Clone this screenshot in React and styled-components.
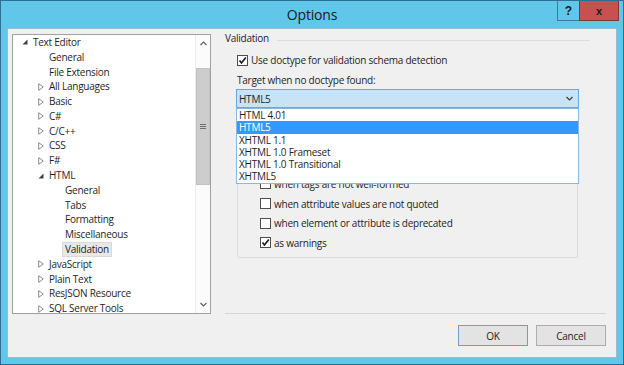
import React from 'react';
import styled, { createGlobalStyle } from 'styled-components';

const GlobalStyle = createGlobalStyle`
  html, body {
    margin: 0;
    padding: 0;
    background: #ffffff;
  }

  body {
    font-family: "Segoe UI", "Open Sans", "Noto Sans", sans-serif;
    font-size: 10px;
    color: #1e1e1e;
  }
`

const Frame = styled.div`
  width: 624px;
  height: 365px;
  box-sizing: border-box;
  border: 1px solid #2f6f8f;
  background: #60c6ea;
  display: flex;
  flex-direction: column;
`

const TitleBar = styled.div`
  height: 27px;
  flex-shrink: 0;
  display: grid;
  grid-template-columns: 1fr auto 1fr;
`

const Title = styled.div`
  grid-column: 2;
  align-self: center;
  font-size: 14px;
  color: #1a1a1a;
  letter-spacing: -0.2px;
`

const CaptionButtons = styled.div`
  grid-column: 3;
  justify-self: end;
  align-self: start;
  display: flex;
  margin-right: 4px;
`

const CaptionButton = styled.div`
  width: ${p => p.$w}px;
  height: 20px;
  box-sizing: border-box;
  border: 1px solid ${p => p.$close ? '#7a3a3a' : '#3d7d9c'};
  border-top: none;
  margin-left: -1px;
  background: ${p => p.$close ? '#c75050' : '#60c6ea'};
  display: flex;
  align-items: center;
  justify-content: center;
  font-family: "Liberation Sans", Arial, sans-serif;
  font-weight: bold;
  font-size: ${p => p.$close ? 11 : 12}px;
  color: #1b1b1b;
`

const Client = styled.div`
  flex: 1;
  margin: 0 6px 6px 6px;
  border: 1px solid #9cbccb;
  background: #f0f0f0;
  display: flex;
  flex-direction: column;
`

const Body = styled.div`
  display: flex;
  padding: 5px 10px 0 4px;
`

const Tree = styled.div`
  width: 199px;
  height: 280px;
  box-sizing: border-box;
  border: 1px solid #a0a0a0;
  background: #ffffff;
  display: flex;
  flex-shrink: 0;
`

const TreeList = styled.div`
  flex: 1;
  overflow: hidden;
`

const TreeRow = styled.div`
  height: 14.8px;
  display: flex;
  align-items: center;
  padding-left: ${p => 6 + p.$level * 16}px;
  white-space: nowrap;
`

const Expander = styled.span`
  width: 12px;
  height: 12px;
  display: flex;
  align-items: center;
  justify-content: center;
  flex-shrink: 0;
`

const TreeLabel = styled.span`
  margin-left: -1px;
  padding: 0 2px;
  line-height: 13px;
  border: 1px solid ${p => p.$selected ? '#d9d9d9' : 'transparent'};
  background: ${p => p.$selected ? '#e8e8e8' : 'transparent'};
  letter-spacing: -0.25px;
`

const ScrollBar = styled.div`
  width: 14px;
  border-left: 1px solid #ececec;
  display: flex;
  flex-direction: column;
  background: #fbfbfb;
`

const ScrollArrow = styled.div`
  height: 17px;
  display: flex;
  align-items: center;
  justify-content: center;
  flex-shrink: 0;
`

const ScrollTrack = styled.div`
  flex: 1;
  padding-top: 16px;
`

const Thumb = styled.div`
  height: 117px;
  box-sizing: border-box;
  background: #cdcdcd;
  border: 1px solid #c2c2c2;
  display: flex;
  align-items: center;
  justify-content: center;
`

const Pane = styled.div`
  flex: 1;
  margin-left: 14px;
  border-bottom: 1px solid #d5d5d5;
  display: flex;
  flex-direction: column;
`

const Heading = styled.div`
  display: flex;
  align-items: center;
  height: 12px;
  margin-top: -2px;
  letter-spacing: -0.25px;

  &::after {
    content: "";
    flex: 1;
    margin: 4px 16px 0 8px;
    border-top: 1px solid #d9dde0;
  }
`

const Section = styled.div`
  padding-left: 12px;
  display: flex;
  flex-direction: column;
`

const CheckRow = styled.div`
  height: ${p => p.$h || 14}px;
  margin-top: ${p => p.$mt || 0}px;
  padding-left: ${p => p.$indent || 0}px;
  display: flex;
  align-items: center;
  gap: 3px;
  white-space: nowrap;
  letter-spacing: -0.25px;
`

const Box = styled.span`
  width: 11px;
  height: 11px;
  box-sizing: border-box;
  border: 1px solid #4d4d4d;
  background: #ffffff;
  display: flex;
  align-items: center;
  justify-content: center;
  flex-shrink: 0;
`

const FieldLabel = styled.div`
  height: 14px;
  margin-top: 6px;
  display: flex;
  align-items: center;
  letter-spacing: -0.25px;
`

const ComboWrap = styled.div`
  position: relative;
  margin-top: 2px;
  margin-left: -1px;
  width: 343px;
`

const Combo = styled.div`
  height: 19px;
  box-sizing: border-box;
  border: 1px solid #6fa6d6;
  background: #c8e2f6;
  display: flex;
  align-items: center;
  justify-content: space-between;
  padding: 0 5px 0 2px;
  letter-spacing: -0.25px;
`

const DropList = styled.div`
  position: absolute;
  top: 100%;
  left: 0;
  width: 343px;
  box-sizing: border-box;
  border: 1px solid #8ab8d8;
  background: #ffffff;
  z-index: 2;
`

const DropItem = styled.div`
  height: 12.3px;
  line-height: 12.3px;
  padding-left: 2px;
  background: ${p => p.$active ? '#3399ff' : 'transparent'};
  color: ${p => p.$active ? '#ffffff' : '#1e1e1e'};
  letter-spacing: -0.25px;
`

const GroupBox = styled.div`
  margin-top: 4px;
  width: 341px;
  box-sizing: border-box;
  border: 1px solid #dcdcdc;
  border-radius: 2px;
  padding: 61px 0 4px 0;
`

const Footer = styled.div`
  display: flex;
  justify-content: flex-end;
  gap: 8px;
  padding: 11px 10px 11px 0;
`

const Button = styled.div`
  width: 70px;
  height: 21px;
  box-sizing: border-box;
  border: 1px solid ${p => p.$default ? '#6c9fcb' : '#acacac'};
  background: #e3e3e3;
  display: flex;
  align-items: center;
  justify-content: center;
  letter-spacing: -0.2px;
`

const Check = () => (
  <svg width="9" height="9" viewBox="0 0 9 9">
    <polyline points="1.5,4.5 3.5,7 7.8,1.5" fill="none" stroke="#1e1e1e" strokeWidth="1.7" />
  </svg>
)

const CheckBox = ({ checked, label, ...rest }) => (
  <CheckRow {...rest}>
    <Box>{ checked && <Check /> }</Box>
    <span>{ label }</span>
  </CheckRow>
)

const ExpandIcon = ({ state }) => {
  if (state === 'open') {
    return (
      <svg width="6" height="6" viewBox="0 0 6 6">
        <polygon points="5.5,0.5 5.5,5.5 0.5,5.5" fill="#404040" />
      </svg>
    )
  }
  if (state === 'closed') {
    return (
      <svg width="6" height="8" viewBox="0 0 6 8">
        <polygon points="0.7,0.7 5.3,4 0.7,7.3" fill="none" stroke="#8c8c8c" strokeWidth="1" />
      </svg>
    )
  }
  return null
}

const Chevron = ({ up, color = '#606060' }) => (
  <svg width="7" height="5" viewBox="0 0 7 5">
    <polyline points={ up ? '0.5,4 3.5,1 6.5,4' : '0.5,1 3.5,4 6.5,1' } fill="none" stroke={ color } strokeWidth="1.2" />
  </svg>
)

const treeItems = [
  { label: 'Text Editor', level: 0, state: 'open' },
  { label: 'General', level: 1 },
  { label: 'File Extension', level: 1 },
  { label: 'All Languages', level: 1, state: 'closed' },
  { label: 'Basic', level: 1, state: 'closed' },
  { label: 'C#', level: 1, state: 'closed' },
  { label: 'C/C++', level: 1, state: 'closed' },
  { label: 'CSS', level: 1, state: 'closed' },
  { label: 'F#', level: 1, state: 'closed' },
  { label: 'HTML', level: 1, state: 'open' },
  { label: 'General', level: 2 },
  { label: 'Tabs', level: 2 },
  { label: 'Formatting', level: 2 },
  { label: 'Miscellaneous', level: 2 },
  { label: 'Validation', level: 2, selected: true },
  { label: 'JavaScript', level: 1, state: 'closed' },
  { label: 'Plain Text', level: 1, state: 'closed' },
  { label: 'ResJSON Resource', level: 1, state: 'closed' },
  { label: 'SQL Server Tools', level: 1, state: 'closed' },
]

const targets = ['HTML 4.01', 'HTML5', 'XHTML 1.1', 'XHTML 1.0 Frameset', 'XHTML 1.0 Transitional', 'XHTML5']

const errorOptions = [
  { label: 'when tags are not well-formed', checked: false },
  { label: 'when attribute values are not quoted', checked: false },
  { label: 'when element or attribute is deprecated', checked: false },
  { label: 'as warnings', checked: true },
]

export default function App () {
  return (
    <>
      <GlobalStyle />
      <Frame>
        <TitleBar>
          <Title>Options</Title>
          <CaptionButtons>
            <CaptionButton $w={ 23 }>?</CaptionButton>
            <CaptionButton $w={ 40 } $close>x</CaptionButton>
          </CaptionButtons>
        </TitleBar>

        <Client>
          <Body>
            <Tree>
              <TreeList>
                { treeItems.map((item, i) => (
                  <TreeRow key={ i } $level={ item.level }>
                    <Expander><ExpandIcon state={ item.state } /></Expander>
                    <TreeLabel $selected={ item.selected }>{ item.label }</TreeLabel>
                  </TreeRow>
                )) }
              </TreeList>
              <ScrollBar>
                <ScrollArrow><Chevron up /></ScrollArrow>
                <ScrollTrack>
                  <Thumb>
                    <svg width="6" height="6" viewBox="0 0 6 6">
                      <path d="M0 0.5h6M0 2.5h6M0 4.5h6" stroke="#707070" strokeWidth="1" />
                    </svg>
                  </Thumb>
                </ScrollTrack>
                <ScrollArrow><Chevron /></ScrollArrow>
              </ScrollBar>
            </Tree>

            <Pane>
              <Heading>Validation</Heading>
              <Section>
                <CheckBox checked label="Use doctype for validation schema detection" $mt={ 9 } />
                <FieldLabel>Target when no doctype found:</FieldLabel>
                <ComboWrap>
                  <Combo>
                    <span>HTML5</span>
                    <Chevron color="#3c3c3c" />
                  </Combo>
                  <DropList>
                    { targets.map(t => (
                      <DropItem key={ t } $active={ t === 'HTML5' }>{ t }</DropItem>
                    )) }
                  </DropList>
                </ComboWrap>
                <GroupBox>
                  { errorOptions.map(o => (
                    <CheckBox key={ o.label } checked={ o.checked } label={ o.label } $indent={ 22 } $h={ 19.7 } />
                  )) }
                </GroupBox>
              </Section>
            </Pane>
          </Body>

          <Footer>
            <Button $default>OK</Button>
            <Button>Cancel</Button>
          </Footer>
        </Client>
      </Frame>
    </>
  )
}
